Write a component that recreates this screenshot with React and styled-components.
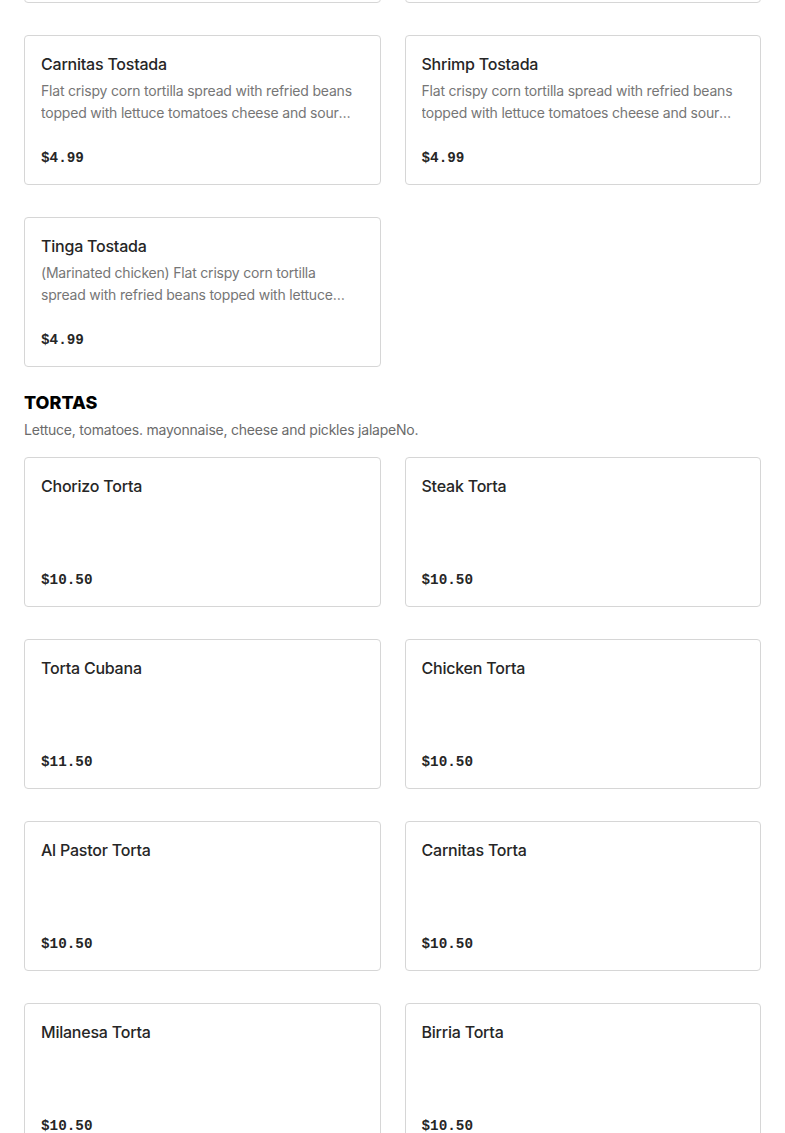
import React from "react";
import styled, { createGlobalStyle } from "styled-components";

const GlobalStyle = createGlobalStyle`
  html, body {
    margin: 0;
    padding: 0;
    background: #fff;
  }
  body {
    font-family: Inter, "Noto Sans", "Liberation Sans", sans-serif;
    color: #2b2b2b;
    -webkit-font-smoothing: antialiased;
  }
`;

const tostadaDesc =
  "Flat crispy corn tortilla spread with refried beans topped with lettuce tomatoes cheese and sour cream.";

const sections = [
  {
    id: "tostadas",
    hidden: true,
    items: [
      { name: "Chicken Tostada", desc: tostadaDesc, price: "$4.99" },
      { name: "Steak Tostada", desc: tostadaDesc, price: "$4.99" },
      { name: "Carnitas Tostada", desc: tostadaDesc, price: "$4.99" },
      { name: "Shrimp Tostada", desc: tostadaDesc, price: "$4.99" },
      {
        name: "Tinga Tostada",
        desc: "(Marinated chicken) " + tostadaDesc,
        price: "$4.99",
      },
    ],
  },
  {
    id: "tortas",
    title: "TORTAS",
    subtitle: "Lettuce, tomatoes. mayonnaise, cheese and pickles jalapeNo.",
    items: [
      { name: "Chorizo Torta", price: "$10.50" },
      { name: "Steak Torta", price: "$10.50" },
      { name: "Torta Cubana", price: "$11.50" },
      { name: "Chicken Torta", price: "$10.50" },
      { name: "Al Pastor Torta", price: "$10.50" },
      { name: "Carnitas Torta", price: "$10.50" },
      { name: "Milanesa Torta", price: "$10.50" },
      { name: "Birria Torta", price: "$10.50" },
    ],
  },
];

const App = () => {
  return (
    <>
      <GlobalStyle />
      <Page>
        {sections.map((section) => (
          <Section key={section.id} $scrolled={section.hidden}>
            {section.title && (
              <SectionHeader>
                <SectionTitle>{section.title}</SectionTitle>
                {section.subtitle && (
                  <SectionSubtitle>{section.subtitle}</SectionSubtitle>
                )}
              </SectionHeader>
            )}
            <ItemGrid>
              {section.items.map((item) => (
                <ItemCard key={item.name}>
                  <ItemName>{item.name}</ItemName>
                  {item.desc && <ItemDesc>{item.desc}</ItemDesc>}
                  <ItemPrice>{item.price}</ItemPrice>
                </ItemCard>
              ))}
            </ItemGrid>
          </Section>
        ))}
      </Page>
    </>
  );
};

// Styled components

const Page = styled.div`
  padding: 0 24px 40px;
  overflow: hidden;
`;

const Section = styled.section`
  margin-top: ${(p) => (p.$scrolled ? "-147px" : "25px")};
`;

const SectionHeader = styled.div`
  margin-bottom: 17px;
`;

const SectionTitle = styled.h2`
  margin: 0;
  font-size: 18px;
  line-height: 22px;
  font-weight: 800;
  color: #000;
`;

const SectionSubtitle = styled.p`
  margin: 6px 0 0;
  font-size: 14px;
  line-height: 20px;
  letter-spacing: -0.22px;
  color: #6b6b6b;
`;

const ItemGrid = styled.div`
  display: grid;
  grid-template-columns: 1fr 1fr;
  column-gap: 24px;
  row-gap: 32px;
`;

const ItemCard = styled.div`
  display: flex;
  flex-direction: column;
  box-sizing: border-box;
  height: 150px;
  padding: 16px 16px 14px;
  border: 1px solid #d6d6d6;
  border-radius: 4px;
  background: #fff;
`;

const ItemName = styled.h3`
  margin: 0;
  font-size: 16px;
  line-height: 24px;
  font-weight: 500;
  letter-spacing: -0.22px;
  color: #262626;
`;

const ItemDesc = styled.p`
  margin: 4px 0 0;
  font-size: 14px;
  line-height: 22px;
  letter-spacing: -0.2px;
  color: #767676;
  display: -webkit-box;
  -webkit-line-clamp: 2;
  -webkit-box-orient: vertical;
  overflow: hidden;
`;

const ItemPrice = styled.span`
  margin-top: auto;
  font-family: "Liberation Mono", "DejaVu Sans Mono", monospace;
  font-size: 14.3px;
  line-height: 24px;
  font-weight: 700;
  color: #262626;
`;

export default App;
